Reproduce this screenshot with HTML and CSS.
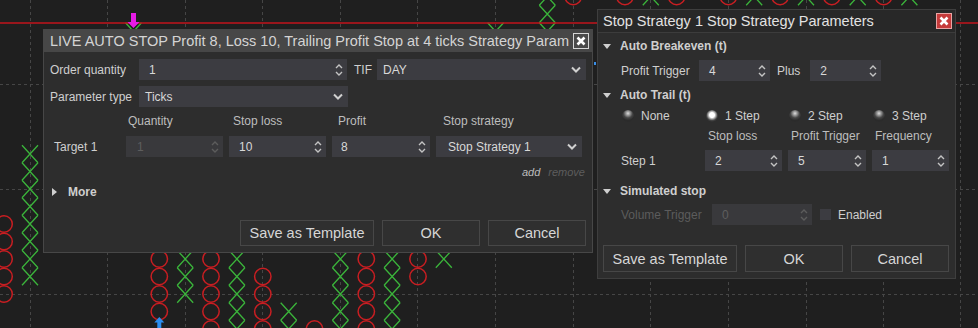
FILE: index.html
```html
<!DOCTYPE html>
<html>
<head>
<meta charset="utf-8">
<link rel="stylesheet" href="styles.css">
</head>
<body>
<div class="desk">
  <svg class="chart" width="978" height="328" viewBox="0 0 978 328">
    <defs>
      <path id="px" d="M-8 -8.75L8 8.75M8 -8.75L-8 8.75"/>
      <circle id="po" r="8.2"/>
    </defs>
    <path class="grid" d="M30.5 0V328M107.5 0V328M185.5 0V328M262.5 0V328M340.5 0V328M417.5 0V328M495.5 0V328M573.5 0V328M650.5 0V328M728.5 0V328M806.5 0V328M883.5 0V328M960.5 0V328M0 84.5H978M0 189.5H978M0 294.5H978"/>
    <g class="xs">
      <use href="#px" x="30" y="154"/><use href="#px" x="30" y="171.5"/><use href="#px" x="30" y="189"/><use href="#px" x="30" y="206.5"/><use href="#px" x="30" y="224"/><use href="#px" x="30" y="241.5"/><use href="#px" x="30" y="259"/><use href="#px" x="30" y="276.5"/>
      <use href="#px" x="133.5" y="31.5"/><use href="#px" x="133.5" y="49"/>
      <use href="#px" x="185.2" y="206.5"/><use href="#px" x="185.2" y="224"/><use href="#px" x="185.2" y="241.5"/><use href="#px" x="185.2" y="259"/><use href="#px" x="185.2" y="276.5"/><use href="#px" x="185.2" y="294"/>
      <use href="#px" x="236.9" y="241.5"/><use href="#px" x="236.9" y="259"/><use href="#px" x="236.9" y="276.5"/><use href="#px" x="236.9" y="294"/><use href="#px" x="236.9" y="311.5"/><use href="#px" x="236.9" y="329"/>
      <use href="#px" x="288.7" y="311.5"/><use href="#px" x="288.7" y="329"/>
      <use href="#px" x="340.4" y="241.5"/><use href="#px" x="340.4" y="259"/><use href="#px" x="340.4" y="276.5"/><use href="#px" x="340.4" y="294"/><use href="#px" x="340.4" y="311.5"/><use href="#px" x="340.4" y="329"/>
      <use href="#px" x="392.1" y="241.5"/><use href="#px" x="392.1" y="259"/><use href="#px" x="392.1" y="276.5"/><use href="#px" x="392.1" y="294"/><use href="#px" x="392.1" y="311.5"/><use href="#px" x="392.1" y="329"/>
      <use href="#px" x="443.8" y="241.5"/><use href="#px" x="443.8" y="259"/>
      <use href="#px" x="495.6" y="31.5"/><use href="#px" x="495.6" y="49"/>
      <use href="#px" x="547.3" y="-3.5"/><use href="#px" x="547.3" y="14"/><use href="#px" x="547.3" y="31.5"/>
      <use href="#px" x="650.8" y="-3.5"/><use href="#px" x="754.2" y="-3.5"/><use href="#px" x="806" y="-3.5"/><use href="#px" x="857.7" y="-3.5"/><use href="#px" x="909.4" y="-3.5"/>
    </g>
    <g class="os">
      <use href="#po" x="4.1" y="224"/><use href="#po" x="4.1" y="241.5"/><use href="#po" x="4.1" y="259"/><use href="#po" x="4.1" y="276.5"/><use href="#po" x="4.1" y="294"/>
      <use href="#po" x="159.3" y="241.5"/><use href="#po" x="159.3" y="259"/><use href="#po" x="159.3" y="276.5"/><use href="#po" x="159.3" y="294"/><use href="#po" x="159.3" y="311.5"/>
      <use href="#po" x="211" y="241.5"/><use href="#po" x="211" y="259"/><use href="#po" x="211" y="276.5"/><use href="#po" x="211" y="294"/><use href="#po" x="211" y="311.5"/><use href="#po" x="211" y="329"/>
      <use href="#po" x="262.8" y="276.5"/><use href="#po" x="262.8" y="294"/><use href="#po" x="262.8" y="311.5"/><use href="#po" x="262.8" y="329"/>
      <use href="#po" x="314.5" y="329"/>
      <use href="#po" x="366.3" y="241.5"/><use href="#po" x="366.3" y="259"/><use href="#po" x="366.3" y="276.5"/><use href="#po" x="366.3" y="294"/><use href="#po" x="366.3" y="311.5"/><use href="#po" x="366.3" y="329"/>
      <use href="#po" x="418" y="241.5"/><use href="#po" x="418" y="259"/><use href="#po" x="418" y="276.5"/>
      <use href="#po" x="573.2" y="-3.5"/><use href="#po" x="624.9" y="-3.5"/><use href="#po" x="676.6" y="-3.5"/><use href="#po" x="728.4" y="-3.5"/><use href="#po" x="780.1" y="-3.5"/><use href="#po" x="831.8" y="-3.5"/><use href="#po" x="883.6" y="-3.5"/>
    </g>
    <path class="price" d="M0 23H978"/>
    <path class="arr-m" d="M131 13H136V22H139.5L133.5 28L127.5 22H131Z"/>
    <path class="arr-b" d="M159.3 317L164.3 322.5H161.3V328H157.3V322.5H154.3Z"/>
    <rect class="dot" x="594" y="62" width="2" height="3"/>
  </svg>

  <div class="dlg dlg1">
    <div class="tbar">
      <span class="ttl">LIVE AUTO STOP Profit 8, Loss 10, Trailing Profit Stop at 4 ticks Strategy Param</span>
      <span class="xbtn grey"><svg width="10" height="10" viewBox="0 0 10 10"><path d="M1.5 1.5L8.5 8.5M8.5 1.5L1.5 8.5"/></svg></span>
    </div>
    <div class="body b1">
      <div class="row">
        <span class="lbl w89">Order quantity</span>
        <div class="inp num w208"><span>1</span><svg class="spin" width="8" height="14" viewBox="0 0 8 14"><path d="M1 5L4 2L7 5M1 9L4 12L7 9"/></svg></div>
        <span class="lbl tif">TIF</span>
        <div class="inp sel grow"><span>DAY</span><svg class="chev" width="10" height="7" viewBox="0 0 10 7"><path d="M1 1.5L5 5.5L9 1.5"/></svg></div>
      </div>
      <div class="row r2">
        <span class="lbl w89">Parameter type</span>
        <div class="inp sel w209"><span>Ticks</span><svg class="chev" width="10" height="7" viewBox="0 0 10 7"><path d="M1 1.5L5 5.5L9 1.5"/></svg></div>
      </div>
      <div class="tgrid">
        <span></span>
        <span class="hd h1">Quantity</span>
        <span class="hd h2">Stop loss</span>
        <span class="hd h3">Profit</span>
        <span class="hd h4">Stop strategy</span>
        <span class="lbl tgt">Target 1</span>
        <div class="inp num dis q1"><span>1</span><svg class="spin" width="8" height="14" viewBox="0 0 8 14"><path d="M1 5L4 2L7 5M1 9L4 12L7 9"/></svg></div>
        <div class="inp num"><span>10</span><svg class="spin" width="8" height="14" viewBox="0 0 8 14"><path d="M1 5L4 2L7 5M1 9L4 12L7 9"/></svg></div>
        <div class="inp num p1"><span>8</span><svg class="spin" width="8" height="14" viewBox="0 0 8 14"><path d="M1 5L4 2L7 5M1 9L4 12L7 9"/></svg></div>
        <div class="inp sel ss"><span>Stop Strategy 1</span><svg class="chev" width="10" height="7" viewBox="0 0 10 7"><path d="M1 1.5L5 5.5L9 1.5"/></svg></div>
      </div>
      <div class="addrow"><span class="add">add</span><span class="rem">remove</span></div>
      <div class="more"><span class="tri-r"></span><b>More</b></div>
      <div class="btns">
        <div class="btn w134">Save as Template</div>
        <div class="btn w98">OK</div>
        <div class="btn w98">Cancel</div>
      </div>
    </div>
  </div>

  <div class="dlg dlg2">
    <div class="tbar">
      <span class="ttl">Stop Strategy 1 Stop Strategy Parameters</span>
      <span class="xbtn red"><svg width="10" height="10" viewBox="0 0 10 10"><path d="M1.5 1.5L8.5 8.5M8.5 1.5L1.5 8.5"/></svg></span>
    </div>
    <div class="body b2">
      <div class="sec"><span class="tri-d"></span>Auto Breakeven (t)</div>
      <div class="row ind r7">
        <span class="lbl w78">Profit Trigger</span>
        <div class="inp num w71"><span>4</span><svg class="spin" width="8" height="14" viewBox="0 0 8 14"><path d="M1 5L4 2L7 5M1 9L4 12L7 9"/></svg></div>
        <span class="lbl plus">Plus</span>
        <div class="inp num w71"><span>2</span><svg class="spin" width="8" height="14" viewBox="0 0 8 14"><path d="M1 5L4 2L7 5M1 9L4 12L7 9"/></svg></div>
      </div>
      <div class="sec r7"><span class="tri-d"></span>Auto Trail (t)</div>
      <div class="trail ind">
        <span class="ropt"><span class="rad"></span>None</span>
        <span class="ropt"><span class="rad on"></span>1 Step</span>
        <span class="ropt"><span class="rad"></span>2 Step</span>
        <span class="ropt"><span class="rad"></span>3 Step</span>
        <span></span>
        <span class="hd th">Stop loss</span>
        <span class="hd th">Profit Trigger</span>
        <span class="hd th">Frequency</span>
        <span class="lbl">Step 1</span>
        <div class="inp num"><span>2</span><svg class="spin" width="8" height="14" viewBox="0 0 8 14"><path d="M1 5L4 2L7 5M1 9L4 12L7 9"/></svg></div>
        <div class="inp num"><span>5</span><svg class="spin" width="8" height="14" viewBox="0 0 8 14"><path d="M1 5L4 2L7 5M1 9L4 12L7 9"/></svg></div>
        <div class="inp num"><span>1</span><svg class="spin" width="8" height="14" viewBox="0 0 8 14"><path d="M1 5L4 2L7 5M1 9L4 12L7 9"/></svg></div>
      </div>
      <div class="sec r13"><span class="tri-d"></span>Simulated stop</div>
      <div class="row ind r6">
        <span class="lbl dim w91">Volume Trigger</span>
        <div class="inp num dis w100"><span>0</span><svg class="spin" width="8" height="14" viewBox="0 0 8 14"><path d="M1 5L4 2L7 5M1 9L4 12L7 9"/></svg></div>
        <span class="chk"></span>
        <span class="lbl enb">Enabled</span>
      </div>
      <div class="btns">
        <div class="btn b27 w134">Save as Template</div>
        <div class="btn b27 w98">OK</div>
        <div class="btn b27 w98">Cancel</div>
      </div>
    </div>
  </div>
</div>
</body>
</html>
```

FILE: styles.css
```css
* { box-sizing: border-box; margin: 0; padding: 0; }
html, body { width: 978px; height: 328px; overflow: hidden; background: #1f1f1f; }
body { font-family: "Liberation Sans", Arial, sans-serif; font-size: 12px; color: #cfcfcf; }

.desk { position: relative; width: 978px; height: 328px; }
.chart { position: absolute; left: 0; top: 0; }
.grid { fill: none; stroke: #464646; stroke-width: 1; stroke-dasharray: 3 3; }
.xs use { fill: none; stroke: #3bb53b; stroke-width: 1.3; }
.os use { fill: none; stroke: #c81e22; stroke-width: 1.5; }
.price { stroke: #c3151c; stroke-width: 1.6; fill: none; }
.arr-m { fill: #e61be6; }
.arr-b { fill: #2b8ef0; }
.dot { fill: #3a8ee6; }

.dlg { position: absolute; display: flex; flex-direction: column; background: #2d2d2d; border: 1px solid #474747; }
.dlg1 { left: 43px; top: 29px; width: 550px; height: 224px; }
.dlg2 { left: 597px; top: 9px; width: 359px; height: 270px; border-color: #3e3e3e; }

.tbar { flex: none; display: flex; align-items: center; height: 22px; }
.dlg1 .tbar { background: #474747; padding: 0 3px 0 6px; }
.dlg2 .tbar { background: #282828; height: 23px; border-bottom: 1px solid #3c3c3c; padding: 0 3px 0 5px; }
.ttl { flex: 1; overflow: hidden; white-space: nowrap; font-size: 14.5px; color: #d4d4d4; }
.dlg2 .ttl { color: #e2e2e2; }
.xbtn { flex: none; width: 16px; height: 16px; display: flex; align-items: center; justify-content: center; }
.xbtn.grey { background: #4a4a4a; border: 1px solid #d6d6d6; }
.xbtn.red { background: #c53a3a; border: 1px solid #e8a4a4; }
.xbtn path { stroke: #fff; stroke-width: 2.6; fill: none; }

.body { flex: 1; display: flex; flex-direction: column; }
.b1 { padding: 7px 6px 6px 6px; }
.b2 { padding: 6px 6px 6px 5px; }

.row { display: flex; align-items: center; height: 21px; flex: none; }
.r2 { margin-top: 6px; }
.r6 { margin-top: 6px; }
.r7 { margin-top: 7px; }
.r13 { margin-top: 13px; }
.lbl { white-space: nowrap; color: #cfcfcf; }
.w78 { width: 78px; flex: none; }
.w89 { width: 89px; flex: none; }
.w91 { width: 91px; flex: none; }
.w71 { width: 71px; }
.w100 { width: 100px; }
.w208 { width: 208px; }
.w209 { width: 209px; }
.tif { margin: 0 5px 0 7px; }
.plus { margin: 0 10px 0 7px; }

.inp { flex: none; height: 21px; background: #3c3c41; display: flex; align-items: center; justify-content: space-between; color: #d8d8d8; white-space: nowrap; }
.inp.grow { flex: 1; }
.num { padding: 0 4px 0 10px; }
.sel { padding: 0 5px 0 6px; }
.spin path { fill: none; stroke: #c4c4c4; stroke-width: 1.4; }
.chev path { fill: none; stroke: #d0d0d0; stroke-width: 2; }
.inp.dis { background: #39393c; color: #5e5e5e; }
.dis .spin path { stroke: #5c5c5c; }
.q1 { padding-left: 11px; }
.p1 { padding-left: 9px; }
.ss { padding-left: 12px; }

.tgrid { display: grid; grid-template-columns: 70px 97px 97px 98px 146px; grid-template-rows: 14px 21px; column-gap: 6px; row-gap: 8px; align-items: center; margin-top: 7px; }
.hd { color: #bdbdbd; white-space: nowrap; }
.h1 { padding-left: 2px; }
.h2 { padding-left: 4px; }
.h3 { padding-left: 6px; }
.h4 { padding-left: 7px; }
.tgt { padding-left: 4px; }

.addrow { display: flex; justify-content: flex-end; align-items: center; gap: 8px; height: 14px; margin-top: 8px; padding-right: 1px; font-style: italic; font-size: 11px; }
.add { color: #bdbdbd; }
.rem { color: #5d5d5d; }

.more { display: flex; align-items: center; height: 14px; margin-top: 6px; }
.tri-r { width: 0; height: 0; border-top: 4.5px solid transparent; border-bottom: 4.5px solid transparent; border-left: 5px solid #cfcfcf; margin: 0 11px 0 2px; }
.more b { font-weight: bold; color: #cfcfcf; }

.btns { margin-top: auto; display: flex; justify-content: flex-end; gap: 8px; }
.btn { height: 26px; border: 1px solid #474747; background: #2f2f2f; display: flex; align-items: center; justify-content: center; font-size: 14.5px; color: #d6d6d6; white-space: nowrap; }
.b27 { height: 27px; }
.w134 { width: 134px; }
.w98 { width: 98px; }

.sec { display: flex; align-items: center; height: 14px; font-weight: bold; color: #cfcfcf; flex: none; }
.tri-d { width: 0; height: 0; border-left: 4.5px solid transparent; border-right: 4.5px solid transparent; border-top: 5px solid #cfcfcf; margin-right: 9px; }
.ind { margin-left: 18px; }

.trail { display: grid; grid-template-columns: 78px 77px 78px 77px; grid-template-rows: 13px 14px 21px; column-gap: 6px; row-gap: 7px; align-items: center; margin-top: 7px; }
.ropt { display: flex; align-items: center; white-space: nowrap; color: #cfcfcf; }
.rad { width: 12px; height: 12px; border-radius: 50%; margin: 0 7px 0 1px; flex: none; background: radial-gradient(circle at 50% 28%, #dcdcdc 0, #9a9a9a 2px, #464646 4.5px, #2b2b2b 7px); }
.rad.on { background: radial-gradient(circle at 50% 42%, #ffffff 0, #ffffff 2.5px, #bdbdbd 3.5px, #444 5.5px, #2b2b2b 7px); }
.th { padding-left: 3px; }

.dim { color: #5c5c5c; }
.chk { width: 11px; height: 11px; background: #3c3c41; margin-left: 8px; flex: none; }
.enb { margin-left: 7px; }
```
